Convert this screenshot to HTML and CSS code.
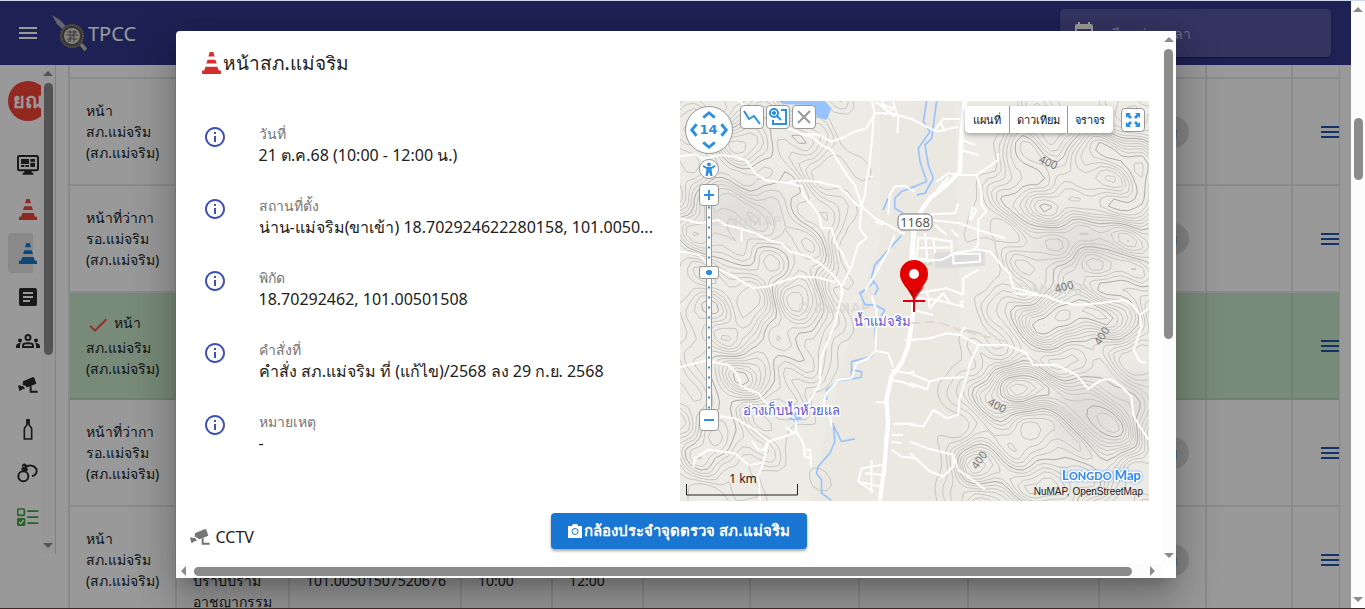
FILE: index.html
```html
<!DOCTYPE html>
<html lang="th">
<head>
<meta charset="utf-8">
<title>TPCC</title>
<link rel="stylesheet" href="styles.css">
</head>
<body>
<svg class="defs" aria-hidden="true">
  <symbol id="cone" viewBox="0 0 54 63"><path d="M22 0h10l4 13H18zM16 22h22l4 11H12zM10 42h34l4 11h6v10H0V53h6z"/></symbol>
  <symbol id="menu" viewBox="0 0 24 24"><path d="M3 18h18v-2H3v2zm0-5h18v-2H3v2zm0-7v2h18V6H3z"/></symbol>
  <symbol id="info" viewBox="0 0 24 24"><path d="M11 7h2v2h-2zm0 4h2v6h-2zm1-9C6.48 2 2 6.48 2 12s4.48 10 10 10 10-4.48 10-10S17.52 2 12 2zm0 18c-4.41 0-8-3.59-8-8s3.59-8 8-8 8 3.59 8 8-3.59 8-8 8z"/></symbol>
  <symbol id="cctv" viewBox="0 0 60 48"><path d="M15 13 45 0l4 2 6 18-22 9-7 2-4-5-8-3zM0 26l6-1 3 3 6-2 6 10-8 1-5 4H4zM35 29l6-2v14h18v6H35z"/></symbol>
</svg>
<div class="window">
  <div class="viewport">
    <header class="topbar">
      <button class="plain" aria-label="เมนู"><svg class="i24"><use href="#menu"/></svg></button>
      <svg class="logo" viewBox="0 0 36 36" aria-hidden="true">
        <path d="M0 0 8 5l27 28-2 3L5 9z" fill="#a9a9b4"/><path d="m31 29 4 5-3 2-4-6z" fill="#c8b9a0"/>
        <circle cx="20" cy="21" r="12" fill="#5c5851"/><circle cx="20" cy="21" r="11" fill="none" stroke="#9b958a" stroke-width="2" stroke-dasharray="1 1"/>
        <circle cx="20" cy="21" r="8" fill="#d6d4cf"/><path d="M15 17h10M14 20h12M15 24h10M18 15v12M22 15v12M16 27l8-11" stroke="#666" stroke-width="1"/>
      </svg>
      <span class="brand">TPCC</span>
      <label class="range"><svg class="i24" viewBox="0 0 24 24"><path d="M19 3h-1V1h-2v2H8V1H6v2H5c-1.100 0-2 .9-2 2v14c0 1.100.9 2 2 2h14c1.100 0 2-.9 2-2V5c0-1.100-.9-2-2-2zm0 16H5V8h14v11z"/></svg><input type="text" placeholder="เลือกช่วงเวลา" aria-label="เลือกช่วงเวลา"></label>
    </header>
    <div class="below">
      <nav class="side">
        <div class="sideitems">
          <div class="avatar">ยณ</div>
          <a href="#" class="s"><svg width="22" height="20" viewBox="0 0 66 60"><path d="M7 3h52q4 0 4 4v35q0 4-4 4H7q-4 0-4-4V7q0-4 4-4z" fill="none" stroke="#2a2a2a" stroke-width="6"/><path d="M12 12h24v15H12zM40 12h14v8H40zM12 30h10v6H12zM25 30h11v6H25zM40 23h14v13H40zM22 46h22v7h5v6H17v-6h5z"/></svg></a>
          <a href="#" class="s red"><svg width="18" height="21"><use href="#cone"/></svg></a>
          <a href="#" class="s blue on"><svg width="18" height="21"><use href="#cone"/></svg></a>
          <a href="#" class="s"><svg class="i24" viewBox="0 0 24 24"><path d="M19 3H5c-1.100 0-2 .9-2 2v14c0 1.100.9 2 2 2h14c1.100 0 2-.9 2-2V5c0-1.100-.9-2-2-2zm-5 14H7v-2h7v2zm3-4H7v-2h10v2zm0-4H7V7h10v2z"/></svg></a>
          <a href="#" class="s"><svg class="i24" viewBox="0 0 24 24"><g fill="none" stroke="#2a2a2a" stroke-width="2"><circle cx="12" cy="8.500" r="2.500"/><path d="M7 18v-1.500c0-3 10-3 10 0V18z"/></g><circle cx="4" cy="11.500" r="2"/><circle cx="20" cy="11.500" r="2"/><path d="M5 19H0v-2c0-2 2-3 5-3-1 1-1 2-1 5zM19 19h5v-2c0-2-2-3-5-3 1 1 1 2 1 5z"/></svg></a>
          <a href="#" class="s"><svg width="20" height="16"><use href="#cctv"/></svg></a>
          <a href="#" class="s"><svg width="10" height="21" viewBox="0 0 30 63"><path d="M12 2h6v14c0 5 8 7 8 15v29H4V31c0-8 8-10 8-15z" fill="none" stroke="#2a2a2a" stroke-width="5"/><path d="M11 0h8v16h-8z"/></svg></a>
          <a href="#" class="s"><svg width="22" height="20" viewBox="0 0 66 60"><g fill="none" stroke="#2a2a2a" stroke-width="6"><circle cx="19" cy="40" r="15"/><path d="M27 12c8-7 25-6 31 6 4 9-2 20-13 21"/></g><path d="M14 6l8-5 9 6-3 5 6 8-7 6-11-3-4-6 5-4z"/><circle cx="21" cy="10" r="2" fill="#fff"/></svg></a>
          <a href="#" class="s"><svg width="22" height="18" viewBox="0 0 66 54"><path d="M5 3h14q3 0 3 3v13q0 3-3 3H5q-3 0-3-3V6q0-3 3-3z" fill="none" stroke="#3fa345" stroke-width="5"/><path d="M5 30h15q5 0 5 4v16q0 4-5 4H5q-5 0-5-4V34q0-4 5-4zM31 7h33v5H31zM31 25h33v5H31zM31 43h33v5H31z" fill="#3fa345"/><path d="m6 42 5 5 9-11" fill="none" stroke="#fff" stroke-width="4"/></svg></a>
        </div>
        <div class="vbar"><i class="up"></i><b class="sidethumb"></b><i class="down"></i></div>
      </nav>
      <main class="card">
        <table>
          <colgroup><col class="c107"><col class="c113"><col class="c172"><col class="c91"><col class="c91"><col class="c107"><col class="c109"><col class="c109"><col class="c131"><col class="c107"><col class="c86"><col class="c46"></colgroup>
          <tbody>
          <tr class="stub"><td></td><td></td><td></td><td></td><td></td><td></td><td></td><td></td><td></td><td></td><td></td><td></td></tr>
          <tr><td>หน้า<br>สภ.แม่จริม<br>(สภ.แม่จริม)</td><td></td><td></td><td></td><td></td><td></td><td></td><td></td><td></td><td class="who"><span>ญ</span></td><td></td><td class="act"><button class="plain" aria-label="ตัวเลือก"><svg class="i24"><use href="#menu"/></svg></button></td></tr>
          <tr><td>หน้าที่ว่ากา<br>รอ.แม่จริม<br>(สภ.แม่จริม)</td><td></td><td></td><td></td><td></td><td></td><td></td><td></td><td></td><td class="who"><span>ญ</span></td><td></td><td class="act"><button class="plain" aria-label="ตัวเลือก"><svg class="i24"><use href="#menu"/></svg></button></td></tr>
          <tr class="picked"><td><svg class="tick" viewBox="0 0 24 24"><path d="M9 16.200 4.800 12l-1.400 1.400L9 19 21 7l-1.400-1.400z"/></svg>หน้า<br>สภ.แม่จริม<br>(สภ.แม่จริม)</td><td></td><td></td><td></td><td></td><td></td><td></td><td></td><td></td><td></td><td></td><td class="act"><button class="plain" aria-label="ตัวเลือก"><svg class="i24"><use href="#menu"/></svg></button></td></tr>
          <tr><td>หน้าที่ว่ากา<br>รอ.แม่จริม<br>(สภ.แม่จริม)</td><td></td><td></td><td></td><td></td><td></td><td></td><td></td><td></td><td class="who"><span>ญ</span></td><td></td><td class="act"><button class="plain" aria-label="ตัวเลือก"><svg class="i24"><use href="#menu"/></svg></button></td></tr>
          <tr><td>หน้า<br>สภ.แม่จริม<br>(สภ.แม่จริม)</td><td><br><br><br>ปราบปราม<br>อาชญากรรม</td><td><br><br>101.00501507520676</td><td><br><br>10:00</td><td><br><br>12:00</td><td></td><td></td><td></td><td></td><td class="who"><span>ญ</span></td><td></td><td class="act"><button class="plain" aria-label="ตัวเลือก"><svg class="i24"><use href="#menu"/></svg></button></td></tr>
          </tbody>
        </table>
      </main>
    </div>
    <div class="overlay">
      <section class="dialog" role="dialog" aria-label="หน้าสภ.แม่จริม">
        <div class="content">
          <h2><svg width="19" height="22"><use href="#cone"/></svg>หน้าสภ.แม่จริม</h2>
          <div class="cols">
            <ul class="facts">
              <li><svg class="i24"><use href="#info"/></svg><div><small>วันที่</small><p>21 ต.ค.68 (10:00 - 12:00 น.)</p></div></li>
              <li><svg class="i24"><use href="#info"/></svg><div><small>สถานที่ตั้ง</small><p>น่าน-แม่จริม(ขาเข้า) 18.702924622280158, 101.0050...</p></div></li>
              <li><svg class="i24"><use href="#info"/></svg><div><small>พิกัด</small><p>18.70292462, 101.00501508</p></div></li>
              <li><svg class="i24"><use href="#info"/></svg><div><small>คำสั่งที่</small><p>คำสั่ง สภ.แม่จริม ที่ (แก้ไข)/2568 ลง 29 ก.ย. 2568</p></div></li>
              <li><svg class="i24"><use href="#info"/></svg><div><small>หมายเหตุ</small><p>-</p></div></li>
            </ul>
            <div class="map">
              <svg class="terrain" viewBox="0 0 469 400" preserveAspectRatio="xMidYMid slice">
                <defs><filter id="soft"><feGaussianBlur stdDeviation="14"/></filter></defs>
                <rect width="469" height="400" fill="#edebe6"/>
                <path d="M200 0h75l10 400H130l30-130 40-130z" fill="#ebe8e2"/>
                <g fill="#d3d3d3" opacity=".6" filter="url(#soft)"><ellipse cx="400" cy="145" rx="45" ry="18"/><ellipse cx="405" cy="315" rx="30" ry="35"/><ellipse cx="455" cy="300" rx="20" ry="30"/><ellipse cx="60" cy="110" rx="40" ry="20"/></g>
                <path id="minor" fill="none" stroke="#cac7c3" stroke-width="1"/>
                <path id="major" fill="none" stroke="#aeaba8" stroke-width="1"/>
                <g class="wm"><text x="30" y="125">© NuMAP</text><text x="118" y="212">© NuMAP</text><text x="335" y="193">© NuMAP</text></g>
                <g transform="translate(-5 -6) scale(.333)">
                  <path d="M305 18h145l20 22-15 35-30-10-10-35-85-2z" fill="#98c3ff"/>
                  <path class="river" d="M720 275l-40 15-20 20v30l25 15M625 345l15-35M680 422l-80 88-10 40 20 30-10 20M560 595l40-35"/>
                  <path class="road" d="M15 185l45-7 25 14 50-12 45 5 35 12 25 38 35 22 70 8 35 10 5 25 30 35 20 30 5 35h30l10 40 25 40 17 40M345 260l45-3 45 5 55 13 30 25 25 30 17 5M340 100l40 18 30 7 30 25 30 15 20 35 30 45 20 25 22 65M375 118h55l40 22 30-10 40-20 35-10 25-45h50l70 20M597 60l-5 70-7 70-10 60-5 40-10 35-5 65 20 30-25 20-20 65-30 60v25M15 370l60 15 55-10 20 15 45 10 45 15 40 20 40 10 25 25 55 15 40 25 35 30 25 35M15 470l55 10 40 35 50 20 40 25 35 20 45-5 40-15 50-15 60 3 50 14M562 335l38 35 40 20 40 25h10M590 15l10 40M600 22l55 18-25 20M655 20l15 50-2 45M620 15l20 40M610 25l50 40M640 360l5-60 15-25 30-3 30 18M570 590l30-50 40-70 20-50M200 400v40M190 15l45 42M585 245h10M600 380l25 10"/>
                  <path class="road wide" d="M715 400v140"/>
                </g>
                <g transform="translate(230 -6) scale(.333)">
                  <path class="town" d="M75 472l150-4v45l-75 5-75 2z"/><path d="M25 495l38-8 5 25-40 8z" fill="#d4dfcc"/>
                  <path class="river" d="M50 18L40 80l20 30-35 50 5 40 20 60-50 20M80 18l-15 112-20 20 10 60 15 40-25 45-25 5"/>
                  <path class="road" d="M0 70l80 40 65-15M75 105l25-33h50M90 80l15 30M155 135l40 15M155 165l50 15M265 175v20l-35 25-30 20h-45l-40-5-35 25M200 240l15 50v40l15 20-25 25v75l-15 15M60 375l90 10 55 20 80 25M60 358l75-3 10-30M178 375l10-38 12 8-17 32M25 430h35l65 10v40l-30 15-70 5M20 460l100-2M5 490l60 5M45 415l8 90M25 425l-5 70M70 430l5 45M75 390l35 30M130 475l70-10 40 5 60 70 10 40 70 17M130 478l80-2v24l-80 6zM160 600v-50l45-25M0 600l110-20 50 20M125 405l20 20M80 290l20-30M95 275l20-30"/>
                  <path class="road wide" d="M165 18l-10 92-5 120-40 40-50 40-25 35-20 45-10 80v80"/>
                </g>
                <g transform="translate(-5 189) scale(.333)">
                  <path class="river" d="M475 400l5 55-15 35-35 40-5 20 15 20v40l30 22M475 405l25 50 40-8M455 330v-30l35-28 40-4V215l60-15 15-20-5-70 30-50-30-15-30-1-15-35 15-10M530 240l30 5v17l-50 8"/><path d="M362 365l7 13 14 7-14 7-7 13-7-13-14-7 14-7z" fill="#98c3ff"/>
                  <path class="road" d="M505 0l-25 100-43 110-2 70-35 60-35 40M15 232l75-20 70 13 25 25 15 40 50 20 20 25 30 20 60 30M135 380l45 5 60 35 40 35 50-15 35-15-3-35M280 455l-15 65-15 40 5 72M55 535l5-30 40-25 80 10 40 35 40-5M230 452l20 28h20l5-20M365 425l20 35 5 40 18 5-3-25h-20M408 505v25M332 412l30 20M470 410l-5-40-20-30 10-30 35-40 40-5 15-45 35-15 23-22 37 7 15 40M603 183l2-123-15-40M560 535l65-10M560 535l-10 40 65 15M590 510v100M570 550l50 5M550 575l45 30M650 240l50 10 20-5M655 402h65M650 435h35M650 455l30 5M603 337h35M650 480l30 20 40 5M650 270l40 8 30 15M690 150h30"/>
                  <path class="road wide" d="M715 30v40l-15 100-20 50-30 40-15 70 5 70-5 50-7 90-13 92"/>
                </g>
                <g transform="translate(230 189) scale(.333)">
                  <path d="M0 100l80-5 70 25 140 35" fill="none" stroke="#ded6cd" stroke-width="5" stroke-dasharray="30 14"/>
                  <path class="road" d="M0 150l60-5 50-15 40 5 55 30h85l60 25 20 35h70l60 30 35 42 40-27 30-2 35 27 25 25 5 55 20 35 27 40M310 10l70 5 30 3 40 17 50 10 80-7 60-8 30 15 20 30 27-20M690 75l5 35-23 70 18 35 18 3M205 165l-25 55-15 60-17 50-3 45-35 10-40-25-30 50-40-5M0 250l60 25 35-10 70-3M60 275l-10 23-50-18M0 455l50 20 80 20 15 45 35 25 45 33M0 490l60 55 40 15 30-30v-35M165 110l-15 25M0 20l80 10 20-20M20 0l10 40M50 0l10 55 20-25 80 20-10-12 12-5M10 60l60 15M100 10l20 30"/>
                </g>
                <g class="elev"><text transform="translate(358 61) rotate(25)">400</text><text transform="translate(376 192) rotate(-15)">400</text><text transform="translate(420 245) rotate(-58)">400</text><text transform="translate(307 303) rotate(30)">400</text><text transform="translate(297 369) rotate(-55)">400</text></g>
                <g class="place"><text x="174" y="225">น้ำแม่จริม</text><text x="63" y="314">อ่างเก็บน้ำห้วยแล</text></g>
                <rect x="218" y="113" width="34" height="16" rx="5" fill="#fff" stroke="#777"/><text class="shield" x="235" y="126">1168</text>
                <path d="M234 200c-1-9-14-16-14-27a14 14 0 0 1 28 0c0 11-13 18-14 27z" fill="#e50000"/><path d="M227 187l4 3 7-2 6-2-10 14z" fill="#a80000" opacity=".7"/><circle cx="234" cy="173" r="5" fill="#fff"/>
                <path d="M223 200h22M234 189v22" stroke="#e0000f" stroke-width="2"/>
                <path d="M6.500 383v11h111v-11" fill="none" stroke="#222"/><text class="km" x="63" y="382">1 km</text>
                <text class="mark" x="461" y="379"><tspan>L<tspan class="sc">ONGDO</tspan></tspan> Map</text>
                <text class="credit" x="463" y="394">NuMAP, OpenStreetMap</text>
              </svg>
              <div class="zoomer">
                <div class="compass"><svg viewBox="0 0 48 48"><g fill="none" stroke="#2c8fe0" stroke-width="3"><path d="m18 11 6-5 6 5M18 37l6 5 6-5M11 18l-5 6 5 6M37 18l5 6-5 6"/></g></svg><b>14</b></div>
                <button class="man" aria-label="มุมมองถนน"><svg width="14" height="14" viewBox="0 0 14 14" fill="#2c8fe0"><circle cx="7" cy="2.500" r="2"/><path d="M1 3l4 2h4l4-2v2L9.500 7l1 7H8.500L7 10l-1.500 4h-2l1-7L1 5z"/></svg></button>
                <button class="zb" aria-label="ซูมเข้า"><svg width="10" height="10"><path d="M5 0v10M0 5h10" stroke="#2c8fe0" stroke-width="2"/></svg></button>
                <input type="range" min="1" max="20" value="14" aria-label="ระดับการซูม">
                <button class="zb" aria-label="ซูมออก"><svg width="10" height="10"><path d="M0 5h10" stroke="#2c8fe0" stroke-width="2"/></svg></button>
              </div>
              <div class="tools">
                <button aria-label="วัดระยะ"><svg width="18" height="18" viewBox="0 0 18 18"><path d="M1 3l5 8 5-3 6 8" fill="none" stroke="#2c8fe0" stroke-width="2"/></svg></button>
                <button aria-label="ซูมพื้นที่"><svg width="20" height="20" viewBox="0 0 20 20"><g fill="none" stroke="#2c8fe0" stroke-width="2"><circle cx="6" cy="6" r="4"/><path d="M6 4v4M4 6h4M9 9l4 4M13 3h5v14H5v-4"/></g></svg></button>
                <button aria-label="ปิด"><svg width="14" height="14"><path d="M1 1l12 12M13 1 1 13" stroke="#999" stroke-width="2"/></svg></button>
              </div>
              <div class="right">
                <div class="layers"><button>แผนที่</button><button>ดาวเทียม</button><button>จราจร</button></div>
                <button class="full" aria-label="เต็มจอ"><svg width="14" height="14" viewBox="0 0 14 14" fill="#2c8fe0"><path d="M0 0h5L3.500 1.500 6 4 4 6 1.500 3.500 0 5zM14 0v5l-1.500-1.500L10 6 8 4l2.500-2.500L9 0zM0 14V9l1.500 1.500L4 8l2 2-2.500 2.500L5 14zM14 14H9l1.500-1.500L8 10l2-2 2.500 2.500L14 9z"/></svg></button>
              </div>
            </div>
          </div>
          <div class="cams">
            <div class="cc"><svg width="20" height="16"><use href="#cctv"/></svg>CCTV</div>
            <button class="cambtn"><svg width="14" height="14" viewBox="0 0 14 14"><path d="M0 2h4l1-2h4l1 2h4v12H0z" fill="#fff"/><circle cx="7" cy="7.500" r="3" fill="none" stroke="#1976d2"/></svg>กล้องประจำจุดตรวจ สภ.แม่จริม</button>
          </div>
        </div>
        <div class="vbar"><i class="up"></i><b class="dlgthumb"></b><i class="down"></i></div>
        <div class="hbar"><i class="left"></i><b></b><i class="rt"></i></div>
      </section>
    </div>
  </div>
  <div class="vbar page"><i class="up"></i><b class="pagethumb"></b><i class="down"></i></div>
</div>
<footer class="edge"></footer>
<script src="contours.js"></script>
</body>
</html>
```

FILE: styles.css
```css
* { box-sizing: border-box; }
body { margin: 0; height: 100vh; display: flex; flex-direction: column; overflow: hidden; border-top: 1px solid #ccd8ea; font-family: "Noto Sans", "Liberation Sans", sans-serif; font-size: 14px; color: #212121; }
button, input { font: inherit; }
svg { display: block; flex: none; }
.defs { position: absolute; width: 0; height: 0; }
.i24 { width: 24px; height: 24px; }
.plain { background: none; border: 0; padding: 0; color: inherit; }
.plain svg { fill: currentColor; }
.window { flex: 1; min-height: 0; display: flex; }
.viewport { flex: 1; min-width: 0; position: relative; overflow: hidden; display: flex; flex-direction: column; background: #fff; }
.edge { flex: none; height: 1px; background: #3b2724; }

.topbar { flex: none; height: 64px; background: #32388c; color: #fff; display: flex; align-items: center; padding: 0 20px 0 16px; }
.logo { width: 36px; height: 36px; margin-left: 12px; }
.brand { font-size: 20px; }
.range { margin-left: auto; width: 271px; height: 48px; border-radius: 4px; background: #5557a0; display: flex; align-items: center; gap: 10px; padding: 0 12px; box-shadow: 0 1px 2px rgba(0,0,0,.4); }
.range svg { fill: #fff; }
.range input { flex: 1; min-width: 0; padding: 0; border: 0; background: none; font-size: 14px; outline: 0; }
.range input::placeholder { color: #b8b8d6; opacity: 1; }

.below { flex: 1; min-height: 0; display: flex; }
.side { width: 56px; margin-bottom: 54px; border-right: 1px solid #d8d8d8; display: flex; }
.sideitems { width: 41px; overflow: hidden; padding: 16px 0 0 8px; }
.avatar { width: 40px; height: 40px; margin-bottom: 22px; border-radius: 50%; background: #f44336; color: #fff; font-size: 20px; font-weight: 700; line-height: 40px; text-align: center; }
.s { width: 40px; height: 44px; display: flex; align-items: center; justify-content: center; fill: #2a2a2a; }
.red { fill: #f24438; }
.blue { fill: #1976d2; }
.on { height: 40px; margin: 2px 0; background: linear-gradient(90deg, #e4e4e4 25px, transparent 25px); border-radius: 4px; }

.vbar { flex: none; width: 14px; display: flex; flex-direction: column; align-items: center; padding: 6px 0; background: #fcfcfc; }
.vbar b { width: 9px; border-radius: 5px; background: #8b8b8b; }
.vbar i, .hbar i { border: 5px solid transparent; flex: none; }
.vbar .up { border-top: 0; border-bottom-color: #8b8b8b; margin-bottom: 7px; }
.vbar .down { border-bottom: 0; border-top-color: #8b8b8b; margin-top: auto; }
.sidethumb { height: 272px; }
.pagethumb { height: 62px; margin-top: 99px; }
.dlgthumb { height: 290px; }

.card { flex: 1; min-width: 0; overflow: hidden; margin: 0 11px 0 12px; border: solid #e4e4e4; border-width: 0 1px 0 2px; }
table { width: 100%; table-layout: fixed; border-collapse: separate; border-spacing: 0; }
td { height: 107px; padding: 0 16px; border: solid #e8e8e8; border-width: 0 2px 2px 0; line-height: 21px; vertical-align: middle; }
td:last-child { border-right: 0; }
.stub td { height: 14px; }
.c107 { width: 107px; } .c113 { width: 113px; } .c172 { width: 172px; } .c91 { width: 91px; } .c109 { width: 109px; } .c131 { width: 131px; } .c86 { width: 86px; } .c46 { width: 46px; }
tr td:first-child { white-space: nowrap; }
.picked td { background: #c8e6c9; border-color: #bcd8bd; }
.tick { display: inline-block; width: 24px; height: 24px; margin-right: 4px; vertical-align: middle; fill: #f4513c; }
.who { text-align: right; }
.who span { display: inline-block; height: 32px; padding: 0 12px; border-radius: 16px; background: #dedede; line-height: 32px; }
.act { overflow: hidden; padding: 0 0 0 25px; color: #1f56a8; }
.act button { display: block; }

.overlay { position: absolute; inset: 0; display: flex; align-items: center; justify-content: center; background: rgba(0,0,0,.4); }
.dialog { width: 1000px; max-width: calc(100% - 64px); height: calc(100% - 60px); display: grid; grid-template: minmax(0, 1fr) 14px / minmax(0, 1fr) 14px; background: #fff; border-radius: 4px 0 0 0; overflow: hidden; box-shadow: 0 11px 15px -7px rgba(0,0,0,.2), 0 24px 38px 3px rgba(0,0,0,.14), 0 9px 46px 8px rgba(0,0,0,.12); }
.content { overflow: hidden; padding: 16px 13px 0 14px; }
.hbar { display: flex; align-items: center; padding: 0 7px 0 5px; background: #fcfcfc; }
.hbar b { flex: 1; height: 9px; border-radius: 5px; background: #8b8b8b; }
.hbar .left { border-left: 0; border-right-color: #8b8b8b; margin-right: 8px; }
.hbar .rt { border-right: 0; border-left-color: #8b8b8b; margin-left: 18px; }
h2 { display: flex; align-items: center; gap: 2px; height: 32px; margin: 0 0 22px; padding-left: 12px; font-size: 19px; font-weight: 500; }
h2 svg { fill: #d32f2f; }
.cols { display: flex; justify-content: space-between; }
.facts { list-style: none; margin: 0; padding: 8px 0 0 13px; flex: 1; min-width: 0; }
.facts li { display: flex; gap: 32px; height: 72px; padding-top: 16px; }
.facts svg { fill: #3f51b5; }
.facts small { display: block; font-size: 14px; line-height: 18px; color: #757575; }
.facts p { margin: 0; font-size: 16px; line-height: 24px; white-space: nowrap; }
.cams { display: grid; grid-template-columns: 1fr auto 1fr; align-items: start; margin-top: 12px; }
.cc { display: flex; align-items: center; gap: 6px; padding-top: 12px; font-size: 16px; line-height: 24px; fill: #757575; }
.cambtn { display: flex; align-items: center; justify-content: center; gap: 2px; min-width: 256px; height: 36px; margin-left: 20px; padding: 0 16px; border: 0; border-radius: 4px; background: #1976d2; color: #fff; font-weight: 700; font-size: 15px; white-space: nowrap; box-shadow: 0 2px 3px rgba(0,0,0,.35); }

.map { position: relative; width: 469px; height: 400px; overflow: hidden; }
.terrain { width: 100%; height: 100%; }
.road { fill: none; stroke: #fff; stroke-width: 6; stroke-linejoin: round; }
.wide { stroke-width: 13; }
.river { fill: none; stroke: #98c3ff; stroke-width: 5; stroke-linejoin: round; }
.town { fill: #dcdcdc; }
.wm { font-size: 15px; font-weight: 700; fill: #d8d6d2; opacity: .7; }
.elev { font-size: 11px; fill: #777; }
.place { font-size: 13px; fill: #5552d9; paint-order: stroke; stroke: #fff; stroke-width: 3px; }
.shield { font-size: 13px; text-anchor: middle; fill: #555; }
.km { font-size: 12px; text-anchor: middle; fill: #222; }
.mark { font-family: Lato, sans-serif; font-weight: 900; font-size: 13px; text-anchor: end; fill: #3b8cf0; paint-order: stroke; stroke: #fff; stroke-width: 3px; filter: drop-shadow(0 0 1px #5aa2f5); }
.sc { font-size: 11px; }
.credit { font-family: "Liberation Sans", sans-serif; font-size: 10px; text-anchor: end; fill: #222; }
.map button { display: flex; align-items: center; justify-content: center; padding: 0; background: #fff; border: 1px solid #999; border-radius: 4px; }
.zoomer { position: absolute; left: 5px; top: 5px; width: 48px; display: flex; flex-direction: column; align-items: center; }
.compass { position: relative; width: 48px; height: 48px; border: 1px solid #999; border-radius: 50%; background: #fff; }
.compass b { position: absolute; inset: 0; line-height: 46px; text-align: center; color: #2c8fe0; font-size: 13px; font-family: "DejaVu Sans", sans-serif; }
.map .man { width: 20px; height: 20px; border-radius: 50%; margin: 5px 0; }
.map .zb { width: 20px; height: 22px; }
.zoomer input { appearance: none; writing-mode: vertical-lr; direction: rtl; width: 20px; height: 203px; margin: 0; background: radial-gradient(circle, #2c8fe0 1px, transparent 1px) center / 6px 10px no-repeat, linear-gradient(90deg, transparent 7px, #999 7px 8px, #fff 8px 12px, #999 12px 13px, transparent 13px); background-repeat: repeat-y, no-repeat; }
.zoomer input::-webkit-slider-thumb { appearance: none; width: 20px; height: 13px; border: 1px solid #999; border-radius: 3px; background: radial-gradient(circle, #2c8fe0 3px, #fff 3px); }
.tools { position: absolute; left: 60px; top: 4px; display: flex; gap: 2px; }
.map .tools button, .map .full { width: 24px; height: 24px; }
.right { position: absolute; right: 4px; top: 5px; display: flex; align-items: center; gap: 8px; }
.layers { display: flex; height: 27px; background: #fff; border-radius: 4px; box-shadow: 0 2px 4px rgba(0,0,0,.3); }
.map .layers button { border: 0; border-right: 1px solid #999; border-radius: 0; min-width: 45px; padding: 0 7px; font-size: 11px; color: #111; background: none; }
.map .layers button:last-child { border: 0; }
```

FILE: contours.js
```js
// Hills as [x, y, radiusX, radiusY, height]; the valley between them stays flat.
const hills = [
  [70, 40, 60, 30, 8], [45, 130, 55, 35, 9], [120, 205, 34, 50, 9], [70, 95, 60, 22, 5], [60, 275, 50, 32, 9],
  [35, 345, 40, 30, 7], [15, 210, 30, 22, 5], [125, 130, 30, 30, 5],
  [425, 55, 45, 28, 11], [400, 105, 75, 22, 10], [350, 60, 26, 50, 5], [420, 165, 70, 20, 8],
  [405, 215, 55, 28, 12], [340, 290, 55, 24, 13], [425, 320, 35, 38, 12], [300, 365, 40, 28, 8],
  [375, 385, 38, 26, 10], [465, 90, 18, 45, 7], [350, 225, 30, 30, 5]
];
const height = (x, y) => {
  let h = 0;
  for (const [a, b, r, s, z] of hills) h += z * Math.exp(-(((x - a) / r) ** 2 + ((y - b) / s) ** 2));
  const edge = Math.min(1, Math.max(0, (Math.abs(x - 225 + (y - 200) / 8) - 35) / 50));
  return h * edge + edge * (Math.sin(x / 11 + y / 19) + Math.sin(y / 9 - x / 15) + 0.5 * Math.sin(x / 6 - y / 7)) + 0.3;
};
const step = 7;
const trace = level => {
  let d = '';
  for (let x = 0; x < 470; x += step) for (let y = 0; y < 402; y += step) {
    const c = [[x, y], [x + step, y], [x + step, y + step], [x, y + step]];
    const v = c.map(p => height(p[0], p[1]) - level);
    const cut = [];
    for (let k = 0; k < 4; k++) {
      const n = (k + 1) % 4;
      if ((v[k] > 0) !== (v[n] > 0)) {
        const t = v[k] / (v[k] - v[n]);
        cut.push((c[k][0] + t * (c[n][0] - c[k][0])).toFixed(1) + ' ' + (c[k][1] + t * (c[n][1] - c[k][1])).toFixed(1));
      }
    }
    for (let k = 0; k + 1 < cut.length; k += 2) d += 'M' + cut[k] + 'L' + cut[k + 1];
  }
  return d;
};
let minor = '', major = '';
for (let i = 1; i < 24; i++) {
  if (i % 6 === 0) major += trace(i * 0.9);
  else minor += trace(i * 0.9);
}
document.getElementById('minor').setAttribute('d', minor);
document.getElementById('major').setAttribute('d', major);
```
